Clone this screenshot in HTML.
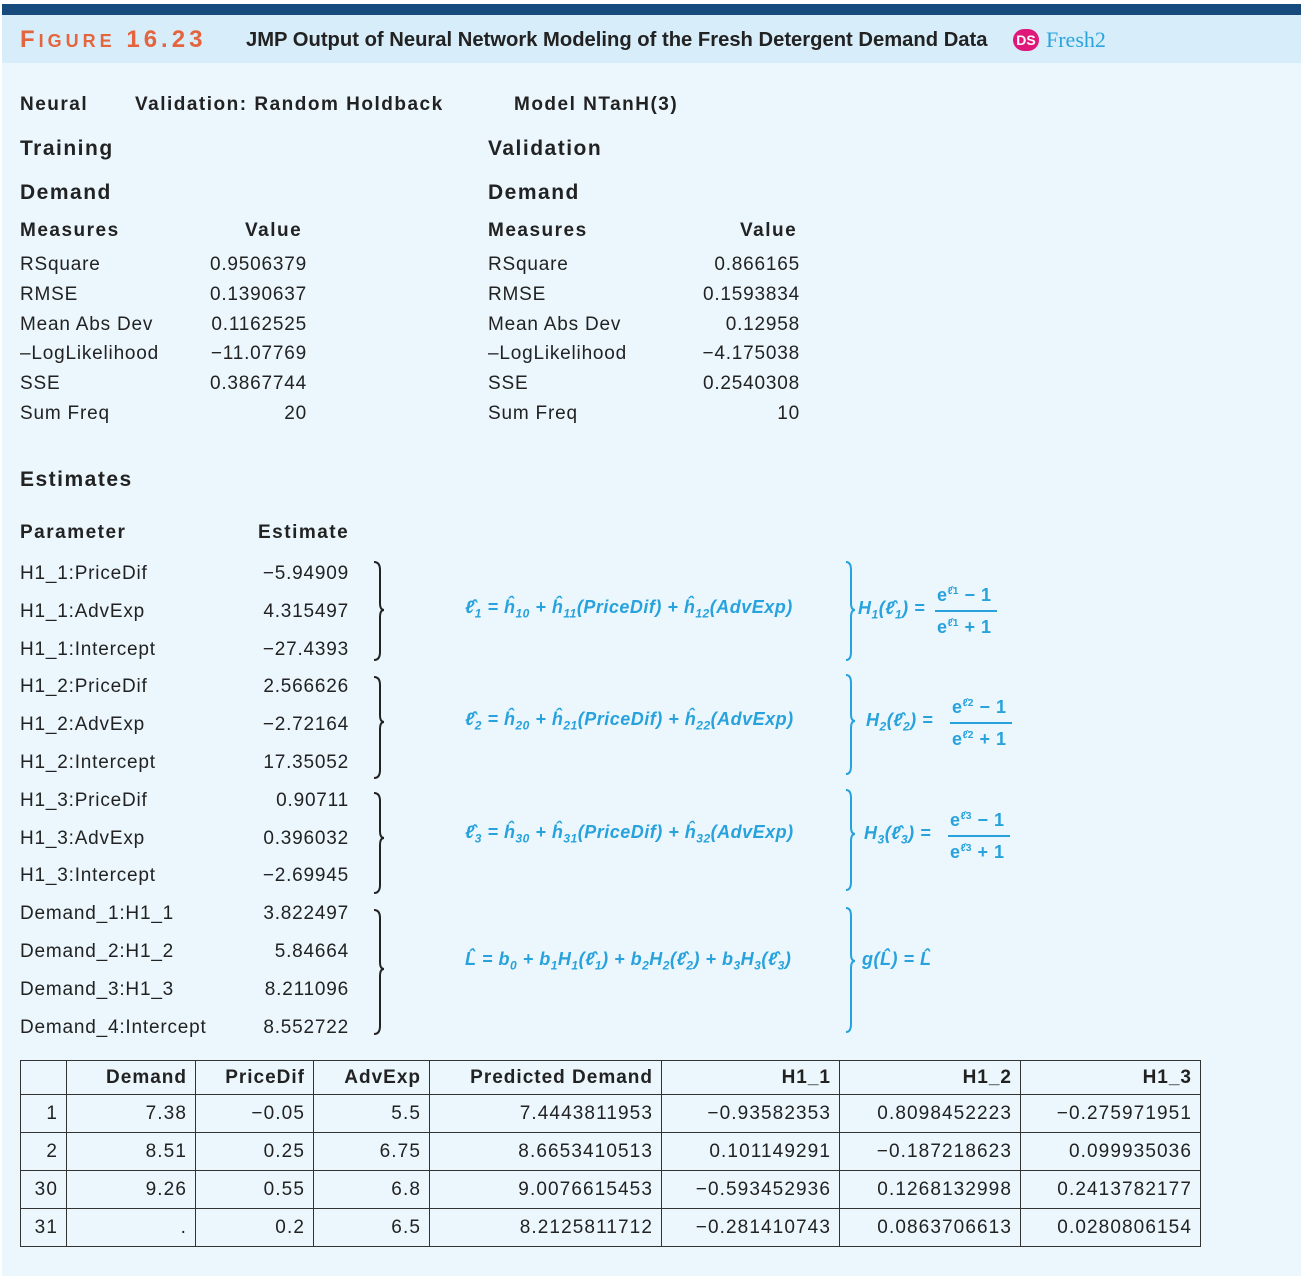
<!DOCTYPE html>
<html><head><meta charset="utf-8"><style>
body{margin:0;width:1303px;height:1280px;background:#fff;position:relative;overflow:hidden;font-family:"Liberation Sans",sans-serif;color:#222}
.bg{position:absolute;left:2px;top:4px;width:1299px;height:1272px;background:#ebf7fd}
.bar{position:absolute;left:2px;top:4px;width:1299px;height:11px;background:#174b7e}
.hdr{position:absolute;left:2px;top:15px;width:1299px;height:48px;background:#d7eefa}
.t{position:absolute;white-space:nowrap;font-size:19px;letter-spacing:0.8px}
.b{font-weight:bold;letter-spacing:1.5px}
.r{text-align:right}
.eq{position:absolute;white-space:nowrap;color:#27a2dc;font-weight:bold;font-style:italic;font-size:18px;letter-spacing:0.5px}
sub{font-size:12px}
table{position:absolute;left:20px;top:1060px;width:1180px;table-layout:fixed;border-collapse:collapse;font-size:19px;letter-spacing:1.1px}
td{border:1.5px solid #333;padding:0 8px 0 0;text-align:right;overflow:hidden;white-space:nowrap}
tr{height:38px}
tr:first-child{height:34px}
tr:first-child td{letter-spacing:1px}
</style></head><body>
<div class="bg"></div><div class="bar"></div><div class="hdr"></div>
<div class="t b" style="left:20px;top:26px;font-size:24px;color:#e4643e;letter-spacing:4px">F<span style="font-size:18px">IGURE</span> 16.23</div>
<div class="t b" style="left:246px;top:29px;font-size:20px;letter-spacing:0;transform:scaleX(1.01);transform-origin:left">JMP Output of Neural Network Modeling of the Fresh Detergent Demand Data</div>
<div class="t b" style="left:1013px;top:29px;width:26px;height:22px;border-radius:11px;background:#e0177a;color:#fff;font-size:14px;letter-spacing:0;text-align:center;line-height:22px">DS</div>
<div class="t" style="left:1046px;top:27px;font-family:'Liberation Serif',serif;font-size:22px;letter-spacing:0;color:#2ba3dc">Fresh2</div>

<div class="t b" style="left:20px;top:94px">Neural</div>
<div class="t b" style="left:135px;top:94px">Validation: Random Holdback</div>
<div class="t b" style="left:514px;top:94px">Model NTanH(3)</div>
<div class="t b" style="left:20px;top:137px;font-size:21px">Training</div>
<div class="t b" style="left:488px;top:137px;font-size:21px">Validation</div>
<div class="t b" style="left:20px;top:181px;font-size:21px">Demand</div>
<div class="t b" style="left:488px;top:181px;font-size:21px">Demand</div>
<div class="t b" style="left:20px;top:220px">Measures</div>
<div class="t b" style="left:245px;top:220px">Value</div>
<div class="t b" style="left:488px;top:220px">Measures</div>
<div class="t b" style="left:740px;top:220px">Value</div>

<div class="t" style="left:20px;top:250px;line-height:29.8px">RSquare<br>RMSE<br>Mean Abs Dev<br>–LogLikelihood<br>SSE<br>Sum Freq</div>
<div class="t r" style="left:150px;width:157px;top:250px;line-height:29.8px">0.9506379<br>0.1390637<br>0.1162525<br>−11.07769<br>0.3867744<br>20</div>
<div class="t" style="left:488px;top:250px;line-height:29.8px">RSquare<br>RMSE<br>Mean Abs Dev<br>–LogLikelihood<br>SSE<br>Sum Freq</div>
<div class="t r" style="left:640px;width:160px;top:250px;line-height:29.8px">0.866165<br>0.1593834<br>0.12958<br>−4.175038<br>0.2540308<br>10</div>

<div class="t b" style="left:20px;top:468px;font-size:21px">Estimates</div>
<div class="t b" style="left:20px;top:522px">Parameter</div>
<div class="t b" style="left:258px;top:522px">Estimate</div>
<div class="t" style="left:20px;top:555px;line-height:37.8px">H1_1:PriceDif<br>H1_1:AdvExp<br>H1_1:Intercept<br>H1_2:PriceDif<br>H1_2:AdvExp<br>H1_2:Intercept<br>H1_3:PriceDif<br>H1_3:AdvExp<br>H1_3:Intercept<br>Demand_1:H1_1<br>Demand_2:H1_2<br>Demand_3:H1_3<br>Demand_4:Intercept</div>
<div class="t r" style="left:200px;width:149px;top:555px;line-height:37.8px">−5.94909<br>4.315497<br>−27.4393<br>2.566626<br>−2.72164<br>17.35052<br>0.90711<br>0.396032<br>−2.69945<br>3.822497<br>5.84664<br>8.211096<br>8.552722</div>

<svg style="position:absolute;left:0;top:0" width="1303" height="1280" fill="none" stroke-width="2">
<g stroke="#222">
<path d="M374 562 Q380 562 380 570 L380 603 Q380 610 384 610 Q380 610 380 617 L380 652 Q380 660 374 660"/>
<path d="M374 677 Q380 677 380 685 L380 715 Q380 722 384 722 Q380 722 380 729 L380 770 Q380 778 374 778"/>
<path d="M374 793 Q380 793 380 801 L380 831 Q380 838 384 838 Q380 838 380 845 L380 885 Q380 893 374 893"/>
<path d="M374 910 Q380 910 380 918 L380 962 Q380 969 384 969 Q380 969 380 976 L380 1026 Q380 1034 374 1034"/>
</g>
<g stroke="#27a2dc">
<path d="M846 562 Q851 562 851 570 L851 603 Q851 610 855 610 Q851 610 851 617 L851 652 Q851 660 846 660"/>
<path d="M846 675 Q851 675 851 683 L851 714 Q851 721 855 721 Q851 721 851 728 L851 766 Q851 774 846 774"/>
<path d="M846 790 Q851 790 851 798 L851 827 Q851 834 855 834 Q851 834 851 841 L851 882 Q851 890 846 890"/>
<path d="M846 908 Q851 908 851 916 L851 954 Q851 961 855 961 Q851 961 851 968 L851 1024 Q851 1032 846 1032"/>
<path d="M935 611 L997 611 M950 723 L1012 723 M948 836 L1010 836"/>
</g>
</svg>

<div class="eq" style="left:465px;top:597px">ℓ̂<sub>1</sub> = ĥ<sub>10</sub> + ĥ<sub>11</sub>(PriceDif) + ĥ<sub>12</sub>(AdvExp)</div>
<div class="eq" style="left:465px;top:709px">ℓ̂<sub>2</sub> = ĥ<sub>20</sub> + ĥ<sub>21</sub>(PriceDif) + ĥ<sub>22</sub>(AdvExp)</div>
<div class="eq" style="left:465px;top:822px">ℓ̂<sub>3</sub> = ĥ<sub>30</sub> + ĥ<sub>31</sub>(PriceDif) + ĥ<sub>32</sub>(AdvExp)</div>
<div class="eq" style="left:465px;top:949px">L̂ = b<sub>0</sub> + b<sub>1</sub>H<sub>1</sub>(ℓ̂<sub>1</sub>) + b<sub>2</sub>H<sub>2</sub>(ℓ̂<sub>2</sub>) + b<sub>3</sub>H<sub>3</sub>(ℓ̂<sub>3</sub>)</div>

<div class="eq" style="left:858px;top:598px">H<sub>1</sub>(ℓ̂<sub>1</sub>) =</div>
<div class="eq" style="left:937px;top:585px;font-style:normal">e<sup style="font-size:10px">ℓ̂1</sup> − 1</div>
<div class="eq" style="left:937px;top:617px;font-style:normal">e<sup style="font-size:10px">ℓ̂1</sup> + 1</div>
<div class="eq" style="left:866px;top:710px">H<sub>2</sub>(ℓ̂<sub>2</sub>) =</div>
<div class="eq" style="left:952px;top:697px;font-style:normal">e<sup style="font-size:10px">ℓ̂2</sup> − 1</div>
<div class="eq" style="left:952px;top:729px;font-style:normal">e<sup style="font-size:10px">ℓ̂2</sup> + 1</div>
<div class="eq" style="left:864px;top:823px">H<sub>3</sub>(ℓ̂<sub>3</sub>) =</div>
<div class="eq" style="left:950px;top:810px;font-style:normal">e<sup style="font-size:10px">ℓ̂3</sup> − 1</div>
<div class="eq" style="left:950px;top:842px;font-style:normal">e<sup style="font-size:10px">ℓ̂3</sup> + 1</div>
<div class="eq" style="left:862px;top:949px">g(L̂) = L̂</div>

<table>
<colgroup><col style="width:46px"><col style="width:129px"><col style="width:118px"><col style="width:116px"><col style="width:232px"><col style="width:178px"><col style="width:181px"><col style="width:180px"></colgroup>
<tr style="font-weight:bold"><td></td><td>Demand</td><td>PriceDif</td><td>AdvExp</td><td>Predicted Demand</td><td>H1_1</td><td>H1_2</td><td>H1_3</td></tr>
<tr><td>1</td><td>7.38</td><td>−0.05</td><td>5.5</td><td>7.4443811953</td><td>−0.93582353</td><td>0.8098452223</td><td>−0.275971951</td></tr>
<tr><td>2</td><td>8.51</td><td>0.25</td><td>6.75</td><td>8.6653410513</td><td>0.101149291</td><td>−0.187218623</td><td>0.099935036</td></tr>
<tr><td>30</td><td>9.26</td><td>0.55</td><td>6.8</td><td>9.0076615453</td><td>−0.593452936</td><td>0.1268132998</td><td>0.2413782177</td></tr>
<tr><td>31</td><td>.</td><td>0.2</td><td>6.5</td><td>8.2125811712</td><td>−0.281410743</td><td>0.0863706613</td><td>0.0280806154</td></tr>
</table>
</body></html>
